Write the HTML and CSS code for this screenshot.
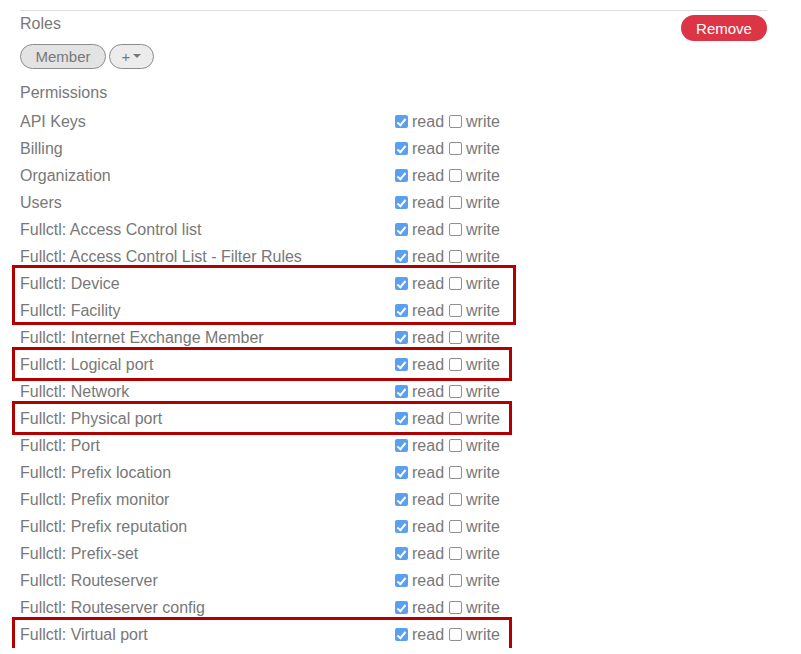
FILE: index.html
```html
<!DOCTYPE html>
<html lang="en">
<head>
    <meta charset="UTF-8">
    <meta name="viewport" content="width=device-width, initial-scale=1.0">
    <title>Role permissions</title>
    <link rel="stylesheet" href="styles.css">
</head>
<body>

<div class="panel">
    <div class="divider"></div>

    <div class="header">
        <div class="label">Roles</div>
        <button class="remove">Remove</button>
    </div>

    <div class="roles">
        <span class="pill">Member</span>
        <span class="pill add">+<span class="caret"></span></span>
    </div>

    <div class="label section">Permissions</div>

    <div class="perms">
        <div class="row"><span class="name">API Keys</span><span class="checks"><span class="box on"></span>read<span class="box"></span>write</span></div>
        <div class="row"><span class="name">Billing</span><span class="checks"><span class="box on"></span>read<span class="box"></span>write</span></div>
        <div class="row"><span class="name">Organization</span><span class="checks"><span class="box on"></span>read<span class="box"></span>write</span></div>
        <div class="row"><span class="name">Users</span><span class="checks"><span class="box on"></span>read<span class="box"></span>write</span></div>
        <div class="row"><span class="name">Fullctl: Access Control list</span><span class="checks"><span class="box on"></span>read<span class="box"></span>write</span></div>
        <div class="row"><span class="name">Fullctl: Access Control List - Filter Rules</span><span class="checks"><span class="box on"></span>read<span class="box"></span>write</span></div>
        <div class="mark wide">
            <div class="row"><span class="name">Fullctl: Device</span><span class="checks"><span class="box on"></span>read<span class="box"></span>write</span></div>
            <div class="row"><span class="name">Fullctl: Facility</span><span class="checks"><span class="box on"></span>read<span class="box"></span>write</span></div>
        </div>
        <div class="row"><span class="name">Fullctl: Internet Exchange Member</span><span class="checks"><span class="box on"></span>read<span class="box"></span>write</span></div>
        <div class="mark">
            <div class="row"><span class="name">Fullctl: Logical port</span><span class="checks"><span class="box on"></span>read<span class="box"></span>write</span></div>
        </div>
        <div class="row"><span class="name">Fullctl: Network</span><span class="checks"><span class="box on"></span>read<span class="box"></span>write</span></div>
        <div class="mark">
            <div class="row"><span class="name">Fullctl: Physical port</span><span class="checks"><span class="box on"></span>read<span class="box"></span>write</span></div>
        </div>
        <div class="row"><span class="name">Fullctl: Port</span><span class="checks"><span class="box on"></span>read<span class="box"></span>write</span></div>
        <div class="row"><span class="name">Fullctl: Prefix location</span><span class="checks"><span class="box on"></span>read<span class="box"></span>write</span></div>
        <div class="row"><span class="name">Fullctl: Prefix monitor</span><span class="checks"><span class="box on"></span>read<span class="box"></span>write</span></div>
        <div class="row"><span class="name">Fullctl: Prefix reputation</span><span class="checks"><span class="box on"></span>read<span class="box"></span>write</span></div>
        <div class="row"><span class="name">Fullctl: Prefix-set</span><span class="checks"><span class="box on"></span>read<span class="box"></span>write</span></div>
        <div class="row"><span class="name">Fullctl: Routeserver</span><span class="checks"><span class="box on"></span>read<span class="box"></span>write</span></div>
        <div class="row"><span class="name">Fullctl: Routeserver config</span><span class="checks"><span class="box on"></span>read<span class="box"></span>write</span></div>
        <div class="mark">
            <div class="row"><span class="name">Fullctl: Virtual port</span><span class="checks"><span class="box on"></span>read<span class="box"></span>write</span></div>
        </div>
    </div>
</div>

</body>
</html>
```

FILE: styles.css
```css
body {
    margin: 0;
    font-family: "Liberation Sans", Arial, sans-serif;
    font-size: 16px;
    color: #787878;
    background-color: #fff;
}
.panel {
    width: 747px;
    padding-left: 20px;
}
.divider {
    margin-top: 10px;
    border-top: 1px solid #dedede;
}
.header {
    display: flex;
    justify-content: space-between;
    align-items: flex-start;
    height: 30px;
}
.label {
    line-height: 20px;
    margin-top: 3px;
}
.section {
    margin-top: 14px;
}
button.remove {
    margin-top: 4px;
    width: 86px;
    height: 26px;
    border: none;
    border-radius: 13px;
    background-color: #dc3545;
    color: #fff;
    font-family: inherit;
    font-size: 15px;
    padding: 0;
}
.roles {
    display: flex;
    gap: 3px;
    margin-top: 3px;
}
.pill {
    display: flex;
    align-items: center;
    justify-content: center;
    box-sizing: border-box;
    height: 25px;
    width: 86px;
    border: 1px solid #8c8c8c;
    border-radius: 13px;
    background-color: #e3e3e3;
    font-size: 15px;
    color: #787878;
}
.pill.add {
    width: 45px;
    background-color: #ececec;
    gap: 3px;
}
.caret {
    width: 0;
    height: 0;
    border-left: 4px solid transparent;
    border-right: 4px solid transparent;
    border-top: 4px solid #787878;
    margin-top: -2px;
}
.perms {
    margin-top: 5px;
}
.row {
    display: flex;
    align-items: center;
    height: 27px;
}
.name {
    width: 375px;
}
.checks {
    display: flex;
    align-items: center;
}
.box {
    box-sizing: border-box;
    width: 13px;
    height: 13px;
    border: 1px solid #8f8f8f;
    border-radius: 2px;
    background-color: #fff;
    margin-right: 4px;
    margin-left: 5px;
    position: relative;
}
.box.on {
    margin-left: 0;
    border: none;
    background-color: #5a9ff0;
}
.box.on::after {
    content: "";
    position: absolute;
    left: 4px;
    top: 1.5px;
    width: 3px;
    height: 7px;
    border-right: 2px solid #fff;
    border-bottom: 2px solid #fff;
    transform: rotate(40deg);
}
.mark {
    position: relative;
}
.mark::before {
    content: "";
    position: absolute;
    left: -8px;
    top: -4px;
    bottom: -3px;
    width: 500px;
    border: 3px solid #b00000;
    box-sizing: border-box;
    pointer-events: none;
}
.mark.wide::before {
    width: 504px;
    top: -5px;
    bottom: -1px;
}
```
